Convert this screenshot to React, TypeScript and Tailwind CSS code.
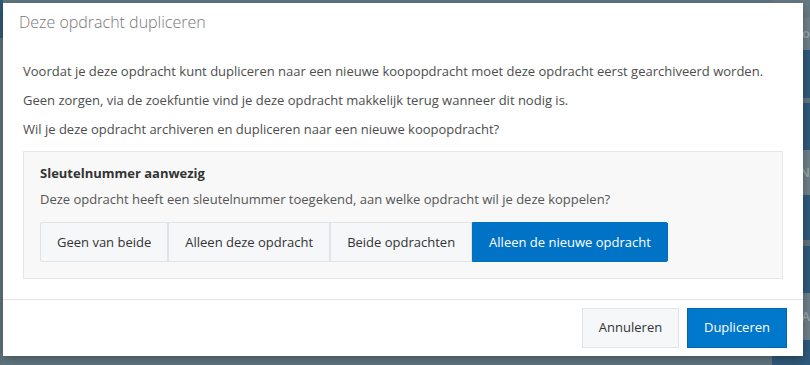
import { useState } from 'react';

const options = ['Geen van beide', 'Alleen deze opdracht', 'Beide opdrachten', 'Alleen de nieuwe opdracht'];

const BackgroundPage = () => (
  <div className="flex h-full w-full">
    <div className="flex w-[3px] flex-col">
      <div className="h-[38px] bg-[#2f5a79]" />
      <div className="grow bg-[#5f737d]" />
    </div>
    <div className="grow bg-[#617680]" />
    <div className="flex w-[38px] flex-col text-[13px] font-semibold text-[#9aa8ae]">
      <div className="h-[17px] bg-[#677a83]" />
      <div className="flex h-[33px] items-center justify-end bg-[#6d7f87] pr-0">Ko</div>
      <div className="h-[48px] bg-[#30597a]" />
      <div className="h-[5px] bg-[#5f737d]" />
      <div className="h-[47px] bg-[#30597a]" />
      <div className="flex h-[45px] items-center justify-end bg-[#6d7f87]">EN</div>
      <div className="h-[45px] bg-[#30597a]" />
      <div className="h-[6px] bg-[#5f737d]" />
      <div className="h-[47px] bg-[#30597a]" />
      <div className="flex h-[47px] items-center justify-end bg-[#6d7f87]">A</div>
      <div className="grow bg-[#30597a]" />
    </div>
  </div>
);

export default function App() {
  const [selected, setSelected] = useState(3);

  return (
    <div className="relative h-[365px] w-[810px] overflow-hidden font-['Open_Sans',sans-serif]">
      <BackgroundPage />

      <div className="absolute left-[3px] top-[3px] flex h-[353px] w-[800px] flex-col bg-white shadow-[0_3px_9px_rgba(0,0,0,0.3)]">
        <div className="px-[16px] pt-[9px]">
          <h2 className="text-[16px] leading-[21px] font-light text-[#777]">Deze opdracht dupliceren</h2>
        </div>

        <div className="px-5 pt-[29px] pb-[20px] text-[13px] leading-[19px] text-[#4d4d4d]">
          <p className="mb-[10px]">
            Voordat je deze opdracht kunt dupliceren naar een nieuwe koopopdracht moet deze opdracht eerst gearchiveerd worden.
          </p>
          <p className="mb-[10px]">Geen zorgen, via de zoekfuntie vind je deze opdracht makkelijk terug wanneer dit nodig is.</p>
          <p className="mb-[12px]">Wil je deze opdracht archiveren en dupliceren naar een nieuwe koopopdracht?</p>

          <div className="border border-[#e6e6e6] bg-[#f8f8f8] px-4 pt-[12px] pb-[16px]">
            <h4 className="font-bold text-[#333]">Sleutelnummer aanwezig</h4>
            <p className="mt-[7px] text-[#555]">
              Deze opdracht heeft een sleutelnummer toegekend, aan welke opdracht wil je deze koppelen?
            </p>
            <div className="mt-[13px] flex">
              {options.map((option, index) => (
                <button
                  key={option}
                  onClick={() => setSelected(index)}
                  className={
                    'h-10 border px-4 text-[13px] first:rounded-l-[2px] last:rounded-r-[2px]' +
                    (selected === index
                      ? ' border-[#0070c0] bg-[#0073c7] text-white'
                      : ' border-[#dfe4e8] bg-[#f5f7f9] text-[#333]')
                  }
                >
                  {option}
                </button>
              ))}
            </div>
          </div>
        </div>

        <div className="flex justify-end gap-2 border-t border-[#e5e5e5] px-4 pt-[8px]">
          <button className="h-10 w-[97px] border border-[#dfe4e8] bg-[#f5f7f9] text-[13px] text-[#333]">
            Annuleren
          </button>
          <button className="h-10 w-[100px] border border-[#0066b0] bg-[#0078cc] text-[13px] text-white">
            Dupliceren
          </button>
        </div>
      </div>
    </div>
  );
}
